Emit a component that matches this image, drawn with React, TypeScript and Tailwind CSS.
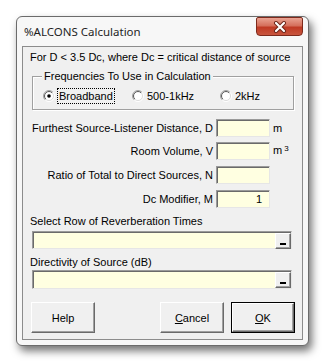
import React from "react";

function Radio({ checked }: { checked?: boolean }) {
  return (
    <svg width="12" height="12" viewBox="0 0 12 12" className="shrink-0">
      <defs>
        <linearGradient id="ro" x1="0" y1="0" x2="1" y2="1">
          <stop offset="0.45" stopColor="#a0a0a0" />
          <stop offset="0.55" stopColor="#ffffff" />
        </linearGradient>
        <linearGradient id="ri" x1="0" y1="0" x2="1" y2="1">
          <stop offset="0.45" stopColor="#555555" />
          <stop offset="0.55" stopColor="#dcdcdc" />
        </linearGradient>
      </defs>
      <circle cx="6" cy="6" r="5.5" fill="none" stroke="url(#ro)" strokeWidth="1" />
      <circle cx="6" cy="6" r="4.5" fill="#ffffff" stroke="url(#ri)" strokeWidth="1" />
      {checked && <circle cx="6" cy="6" r="1.8" fill="#000000" />}
    </svg>
  );
}

function Field({ label, unit, value }: { label: string; unit?: React.ReactNode; value?: string }) {
  return (
    <div className="flex h-[18px] items-center">
      <div className="w-[183px] text-right whitespace-nowrap leading-[14px]">{label}</div>
      <div className="ml-[3px] h-[18px] w-[54px] bg-[#ffffe1] border border-t-[#9a9a9a] border-l-[#9a9a9a] border-b-[#e6e6e6] border-r-[#e6e6e6] shadow-[inset_1px_1px_0_#6a6a6a] text-right pr-[7px] leading-[16px]">
        {value}
      </div>
      <div className="ml-[3px] leading-[14px]">{unit}</div>
    </div>
  );
}

function WideField({ h }: { h: string }) {
  return (
    <div className={`ml-[2px] w-[260px] ${h} bg-[#ffffe1] border border-t-[#9a9a9a] border-l-[#9a9a9a] border-b-[#e6e6e6] border-r-[#e6e6e6] shadow-[inset_1px_1px_0_#6a6a6a] flex justify-end items-start pt-[1px] pr-[0px]`}>
      <div className="w-[16px] h-[16px] bg-[#f0f0f0] border border-t-white border-l-white border-b-[#6a6a6a] border-r-[#6a6a6a] shadow-[inset_-1px_-1px_0_#a0a0a0] flex items-end justify-center pb-[3px]">
        <div className="w-[6px] h-[2px] bg-black" />
      </div>
    </div>
  );
}

function Btn({ children, def }: { children: React.ReactNode; def?: boolean }) {
  const inner = (
    <div className="w-full h-full bg-[#f0f0f0] border border-t-white border-l-white border-b-[#6a6a6a] border-r-[#6a6a6a] shadow-[inset_-1px_-1px_0_#a0a0a0] flex items-center justify-center leading-[14px]">
      {children}
    </div>
  );
  return def ? (
    <div className="w-[64px] h-[31px] border border-black">{inner}</div>
  ) : (
    <div className="w-[64px] h-[31px]">{inner}</div>
  );
}

export default function App() {
  return (
    <div className="w-[326px] h-[364px] bg-white pl-[16px] pt-[16px] text-[11px] text-black font-['Liberation_Sans',Arial,sans-serif]">
      <div className="w-[293px] h-[330px] rounded-[6px] border border-[#6b6b6b] bg-[#f7f7f7] shadow-[3px_5px_9px_rgba(0,0,0,0.55)] flex flex-col px-[5px] pb-[5px]">
        <div className="h-[29px] flex items-start justify-between shrink-0">
          <div className="pt-[7px] pl-[2px] text-[11.5px] leading-[16px] font-['Noto_Sans',sans-serif] text-[#1e1e1e]">%ALCONS Calculation</div>
          <div className="w-[47px] h-[19px] rounded-b-[4px] rounded-t-[2px] border border-[#7e2a1c] bg-[linear-gradient(#eaa392,#d5705c_45%,#c03a24_55%,#c8553e)] flex items-center justify-center">
            <svg width="14" height="12" viewBox="0 0 14 12">
              <path d="M3 2 L11 10 M11 2 L3 10" stroke="#6b2418" strokeWidth="4" strokeLinecap="round" />
              <path d="M3 2 L11 10 M11 2 L3 10" stroke="#ffffff" strokeWidth="2.2" strokeLinecap="round" />
            </svg>
          </div>
        </div>
        <div className="flex-1 border border-[#8c8c8c] bg-[#f0f0f0] flex flex-col pl-[7px]">
          <div className="mt-[3px] h-[14px] leading-[14px] whitespace-nowrap">
            For D &lt; 3.5 Dc, where Dc = critical distance of source
          </div>
          <div className="relative mt-[12px] ml-[2px] w-[262px] h-[34px] border border-[#a0a0a0] shadow-[1px_1px_0_#ffffff,inset_1px_1px_0_#ffffff] shrink-0">
            <div className="absolute left-[9px] top-[-8px] px-[2px] bg-[#f0f0f0] leading-[14px] whitespace-nowrap">
              Frequencies To Use in Calculation
            </div>
            <div className="mt-[10px] pl-[10px] flex items-center h-[18px]">
              <div className="w-[89px] flex items-center">
                <Radio checked />
                <div className="ml-[2px] px-[1px] border border-dotted border-black leading-[14px]">Broadband</div>
              </div>
              <div className="w-[88px] flex items-center">
                <Radio />
                <div className="ml-[3px] leading-[14px]">500-1kHz</div>
              </div>
              <div className="flex items-center">
                <Radio />
                <div className="ml-[3px] leading-[14px]">2kHz</div>
              </div>
            </div>
          </div>
          <div className="mt-[9px]">
            <Field label="Furthest Source-Listener Distance, D" unit="m" />
          </div>
          <div className="mt-[5px]">
            <Field label="Room Volume, V" unit={<span>m<span className="ml-[2px] text-[8px] relative top-[-3px]">3</span></span>} />
          </div>
          <div className="mt-[6px]">
            <Field label="Ratio of Total to Direct Sources, N" />
          </div>
          <div className="mt-[6px]">
            <Field label="Dc Modifier, M" value="1" />
          </div>
          <div className="mt-[6px] h-[14px] leading-[14px]">Select Row of Reverberation Times</div>
          <div className="mt-[3px]">
            <WideField h="h-[18px]" />
          </div>
          <div className="mt-[6px] h-[14px] leading-[14px]">Directivity of Source (dB)</div>
          <div className="mt-[1px]">
            <WideField h="h-[19px]" />
          </div>
          <div className="mt-[13px] flex items-start">
            <div className="ml-[1px]">
              <Btn>Help</Btn>
            </div>
            <div className="ml-[65px]">
              <Btn>
                <span>
                  <span className="underline">C</span>ancel
                </span>
              </Btn>
            </div>
            <div className="ml-[7px]">
              <Btn def>
                <span>
                  <span className="underline">O</span>K
                </span>
              </Btn>
            </div>
          </div>
        </div>
      </div>
    </div>
  );
}
